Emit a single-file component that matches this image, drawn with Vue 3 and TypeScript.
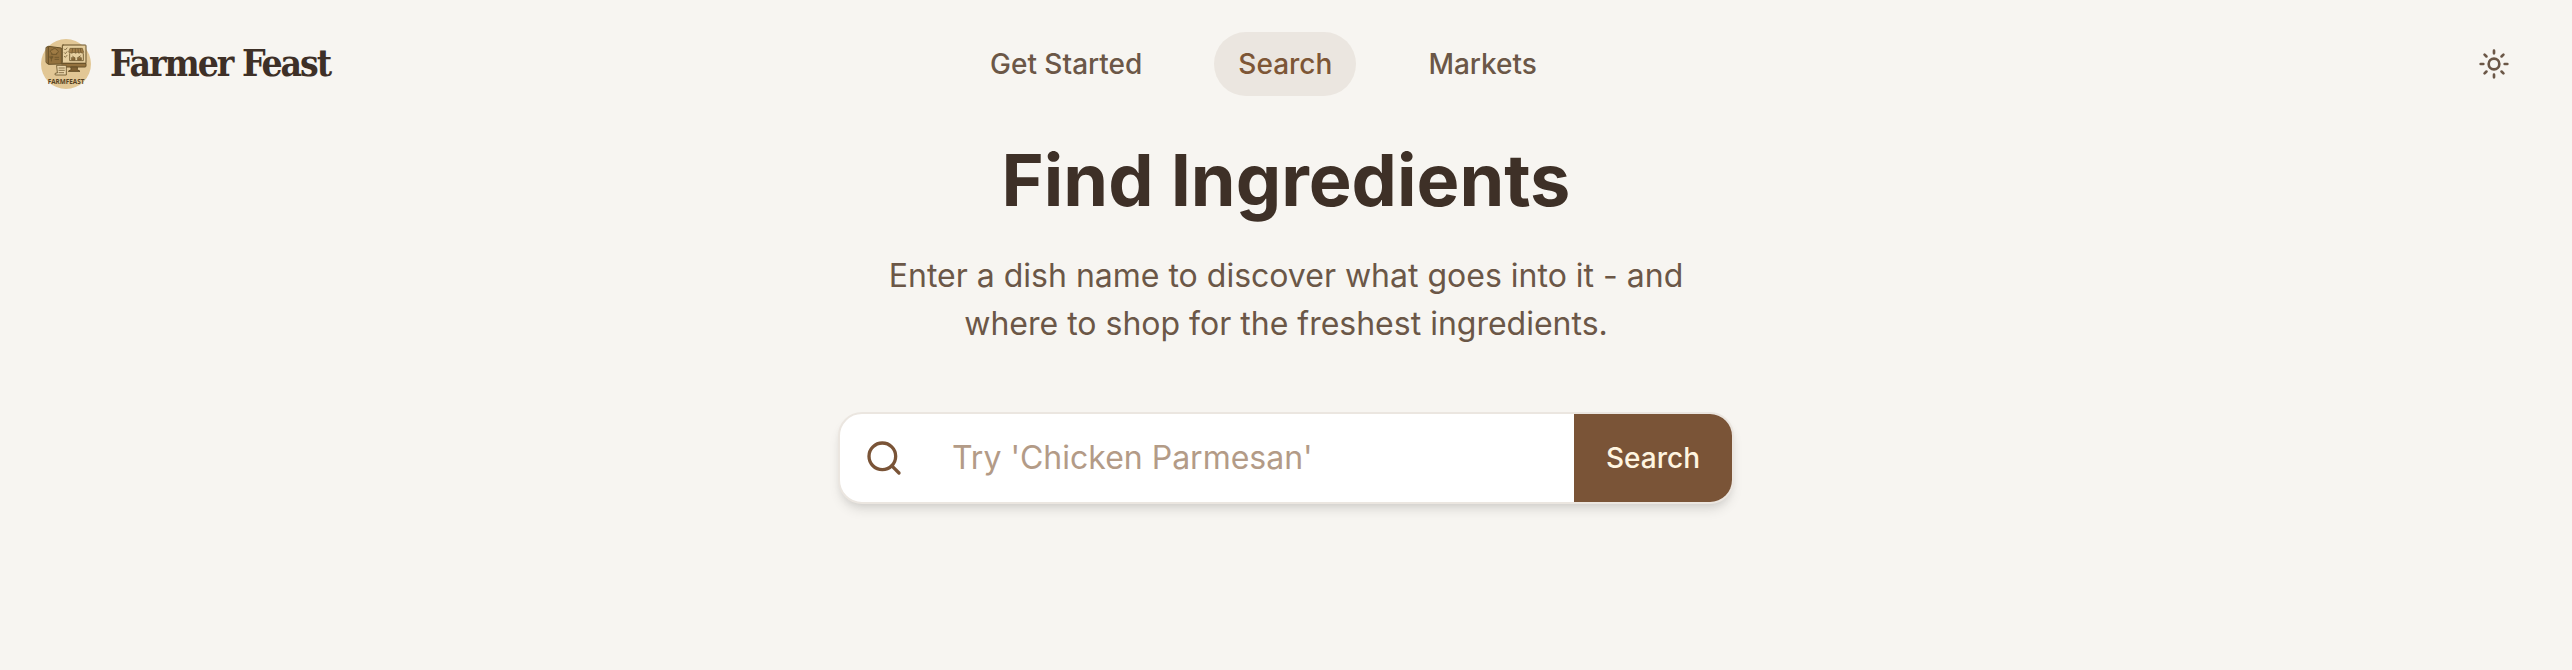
<script setup lang="ts">
import { ref } from 'vue'

interface NavItem {
  label: string
  active: boolean
}

const navItems: NavItem[] = [
  { label: 'Get Started', active: false },
  { label: 'Search', active: true },
  { label: 'Markets', active: false },
]

const query = ref<string>('')
</script>

<template>
  <div class="page">
    <header class="header">
      <a class="brand">
        <svg class="logo" viewBox="30 36 156 156" aria-hidden="true">
          <circle cx="108" cy="117" r="75" fill="#e2c795" />
          <g stroke="#665028" stroke-width="3" stroke-linejoin="round" stroke-linecap="round">
            <path d="M49 67 L55 64 L94 69 V117 L55 118 L49 113 Z" fill="#94723e" />
            <path d="M55 66 V116" fill="none" />
            <path d="M65 84 C58 82 61 74 67 75 C70 69 79 70 80 75 C87 76 86 84 80 84 V88 H66 Z" fill="#a07c45" stroke-width="2.5" />
            <path d="M64 94 V108 M60 94 V99 H68 V94 M75 97 H86 M75 103 H86" fill="none" stroke-width="2.2" />
            <rect x="97" y="60" width="71" height="55" rx="2" fill="#e6cf9f" />
            <path d="M97 115 H168 V123 Q168 126 165 126 H97 Z" fill="#94723e" />
            <path d="M123 126 H142 V134 L150 139 H115 L123 134 Z" fill="#806133" />
            <path d="M103 72 L106 75 L111 69 M103 83 L106 86 L111 80 M103 94 L106 97 L111 91" fill="none" stroke-width="2.2" />
            <path d="M121 70 H157 L161 82 Q157 87 152 82 Q147 87 142 82 Q137 87 132 82 Q126 87 117 82 Z" fill="#a37f49" stroke-width="2" />
            <path d="M128 71 L126 82 M136 71 V82 M144 71 L145 82 M151 71 L153 82" stroke-width="2" />
            <path d="M119 86 V107 H160 V86" fill="none" stroke-width="2.5" />
            <path d="M125 98 H135 V105 H126 Z M143 98 H154 V105 H144 Z" fill="#94723e" stroke-width="2" />
            <path d="M128 94 L132 97 M146 96 L151 93" stroke-width="2.5" />
            <path d="M81 121 H109 V150 H76 Q73 147 77 144 H81 Z" fill="#e9d4a9" stroke-width="2.5" />
            <path d="M87 129 H103 M87 136 H103 M87 143 H101" fill="none" stroke-width="2.2" />
          </g>
          <text x="53" y="176" textLength="110" lengthAdjust="spacingAndGlyphs" class="logo-text">FARMFEAST</text>
        </svg>
        <span class="brand-name">Farmer Feast</span>
      </a>

      <nav class="nav">
        <a v-for="item in navItems" :key="item.label" class="nav-item" :class="{ active: item.active }">{{ item.label }}</a>
      </nav>

      <button class="theme" type="button" aria-label="Toggle theme">
        <svg width="32" height="32" viewBox="0 0 24 24" fill="none" stroke="currentColor" stroke-width="2" stroke-linecap="round">
          <circle cx="12" cy="12" r="4" />
          <path d="M12 2v2M12 20v2M4.93 4.93l1.41 1.41M17.66 17.66l1.41 1.41M2 12h2M20 12h2M6.34 17.66l-1.41 1.41M19.07 4.93l-1.41 1.41" />
        </svg>
      </button>
    </header>

    <main class="main">
      <h1 class="title">Find Ingredients</h1>
      <p class="subtitle">Enter a dish name to discover what goes into it - and<br />where to shop for the freshest ingredients.</p>

      <form class="search" @submit.prevent>
        <span class="search-icon">
          <svg width="40" height="40" viewBox="0 0 24 24" fill="none" stroke="currentColor" stroke-width="2" stroke-linecap="round">
            <circle cx="11" cy="11" r="8" />
            <path d="m21 21-4.3-4.3" />
          </svg>
        </span>
        <input v-model="query" class="search-input" type="text" placeholder="Try 'Chicken Parmesan'" />
        <button class="search-button" type="submit">Search</button>
      </form>
    </main>
  </div>
</template>

<style>
body {
  margin: 0;
  background: #f7f5f1;
}
</style>

<style scoped>
.page {
  min-height: 670px;
  background: #f7f5f1;
  color: #3e3027;
  font-family: Inter, 'Liberation Sans', sans-serif;
}
.page * {
  box-sizing: border-box;
}
.header {
  display: flex;
  align-items: center;
  height: 128px;
  padding: 0 40px;
}
.brand {
  display: flex;
  align-items: center;
  width: 926px;
}
.logo {
  display: block;
  width: 52px;
  height: 52px;
  margin-right: 18px;
  margin-top: -2px;
}
.logo-text {
  font: 700 23px 'Open Sans', sans-serif;
  fill: #574222;
}
.brand-name {
  margin-top: -2px;
  font: 700 37px/48px 'DejaVu Serif Condensed', 'DejaVu Serif', serif;
  font-stretch: condensed;
  letter-spacing: -2.05px;
  white-space: nowrap;
}
.nav {
  display: flex;
  gap: 48px;
}
.nav-item {
  padding: 0 24px;
  border-radius: 32px;
  color: #6b5747;
  font-size: 28px;
  font-weight: 500;
  line-height: 64px;
  white-space: nowrap;
}
.nav-item.active {
  background: #ebe6e0;
  color: #7d5636;
}
.theme {
  display: flex;
  align-items: center;
  justify-content: center;
  width: 76px;
  height: 76px;
  margin-left: auto;
  padding: 0;
  border: 0;
  background: none;
  color: #6b5747;
}
.main {
  display: flex;
  flex-direction: column;
  align-items: center;
}
.title {
  margin: 12px 0 0;
  font-size: 72px;
  font-weight: 700;
  line-height: 80px;
}
.subtitle {
  margin: 32px 0 0;
  color: #6b5747;
  font-size: 32px;
  line-height: 48px;
  text-align: center;
  white-space: nowrap;
}
.search {
  display: flex;
  width: 896px;
  height: 92px;
  margin-top: 64px;
  overflow: hidden;
  border: 2px solid #ebe6e0;
  border-radius: 24px;
  background: #fff;
  box-shadow: 0 8px 12px -2px rgba(0, 0, 0, 0.1), 0 4px 8px -4px rgba(0, 0, 0, 0.1);
}
.search-icon {
  display: flex;
  align-items: center;
  padding: 0 24px;
  color: #7a5437;
}
.search-input {
  flex: 1;
  min-width: 0;
  padding: 0 24px;
  border: 0;
  outline: 0;
  background: transparent;
  color: #3e3027;
  font: 400 32px/48px Inter, sans-serif;
}
.search-input::placeholder {
  color: #b39b87;
  opacity: 1;
}
.search-button {
  width: 158px;
  padding: 0;
  border: 0;
  background: #7a5437;
  color: #fff5e0;
  font: 500 28px/40px Inter, sans-serif;
}
</style>
